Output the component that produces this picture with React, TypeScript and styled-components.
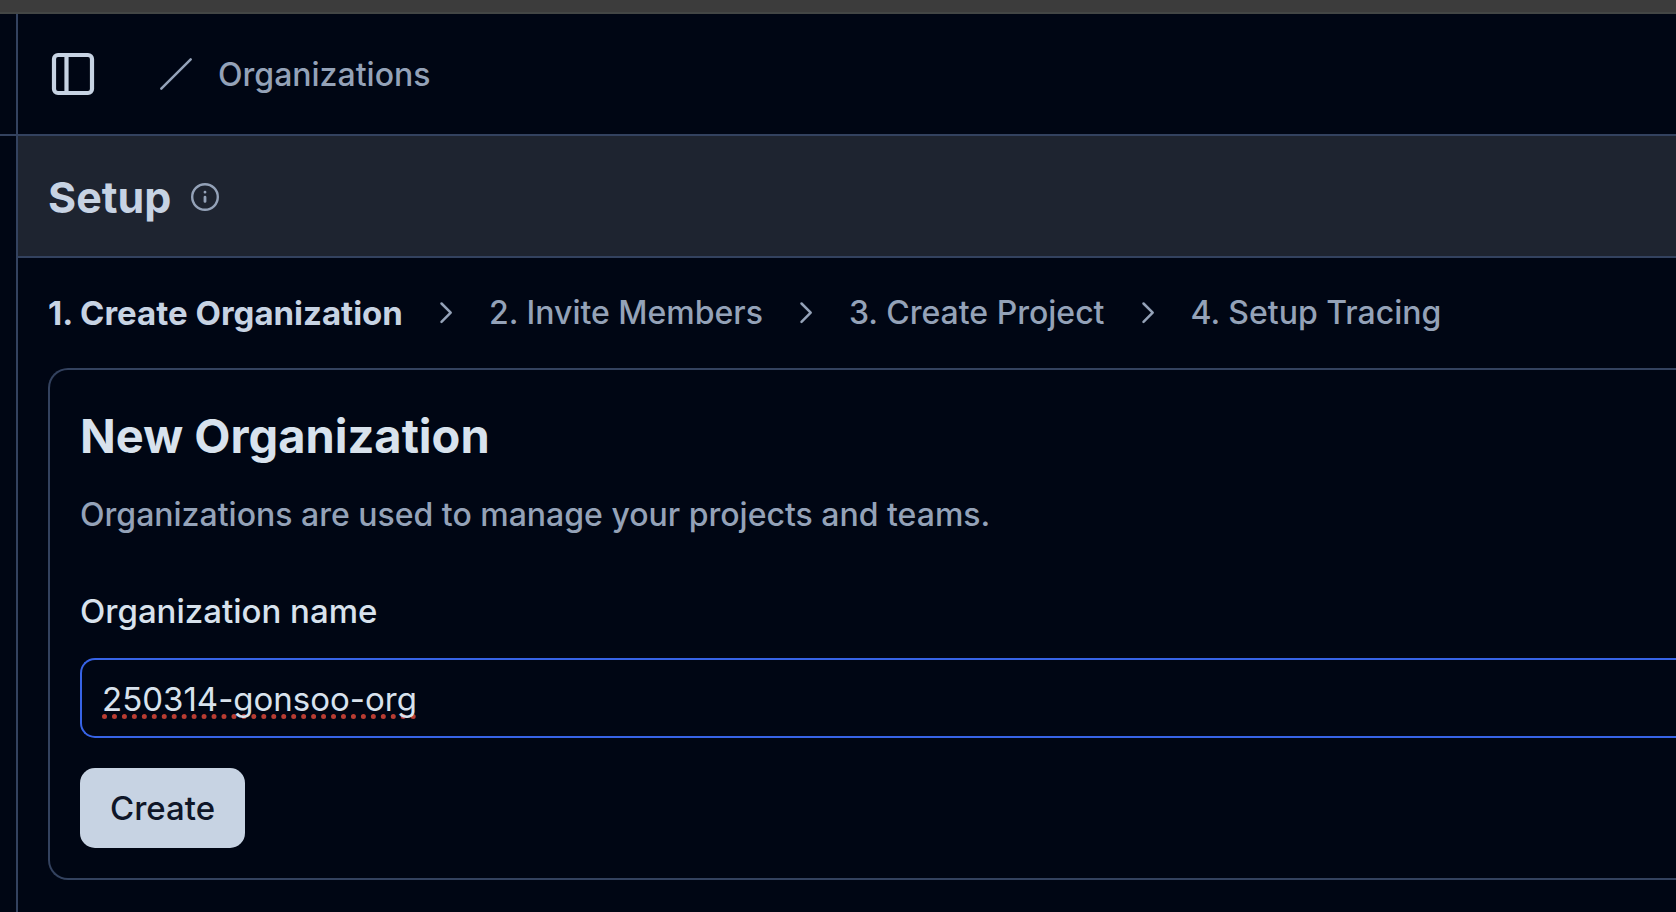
import React from "react";
import styled, { createGlobalStyle } from "styled-components";

const color = {
  page: "#000614",
  line: "#33425f",
  band: "#1e2430",
  bright: "#d8e2ed",
  primary: "#c7d3e3",
  muted: "#94a2b8",
  focus: "#3763e6",
};

const GlobalStyle = createGlobalStyle`
  *, *::before, *::after { box-sizing: border-box; }
  html, body, #root { min-height: 100%; }
  body {
    margin: 0;
    background: ${color.page};
    color: ${color.bright};
    font-family: Inter, "Liberation Sans", sans-serif;
    font-size: 32px;
    font-weight: 450;
    line-height: 48px;
    overflow-x: hidden;
  }
  h1, h2, p, ol { margin: 0; padding: 0; }
`;

const Shell = styled.div`
  min-height: 100vh;
  display: flex;
  flex-direction: column;
`;

const WindowEdge = styled.div`
  height: 14px;
  background: #3c3c3c;
  border-bottom: 2px solid #434645;
`;

const Columns = styled.div`
  flex: 1;
  display: flex;
`;

const Sidebar = styled.aside`
  width: 18px;
  flex: none;
  border-right: 2px solid ${color.line};
`;

const SidebarHeader = styled.div`
  height: 122px;
  border-bottom: 2px solid ${color.line};
`;

const Main = styled.main`
  flex: 1;
  min-width: 0;
`;

const TopBar = styled.header`
  height: 122px;
  display: flex;
  align-items: center;
  padding: 0 30px;
  border-bottom: 2px solid ${color.line};
`;

const IconButton = styled.button`
  display: flex;
  padding: 0;
  border: 0;
  background: none;
  color: ${color.primary};
`;

const Breadcrumb = styled.nav`
  display: flex;
  align-items: center;
  gap: 24px;
  margin-left: 60px;
  color: ${color.muted};
`;

const CrumbLink = styled.a`
  padding-top: 2px;
  color: inherit;
  text-decoration: none;
`;

const TitleBar = styled.div`
  height: 122px;
  display: flex;
  align-items: center;
  gap: 19px;
  padding: 2px 30px 0;
  background: ${color.band};
  border-bottom: 2px solid ${color.line};
  color: ${color.muted};
`;

const PageTitle = styled.h1`
  color: ${color.primary};
  font-size: 43px;
  font-weight: 700;
`;

const Content = styled.div`
  padding: 31px 0 30px 30px;
`;

const Steps = styled.ol`
  display: flex;
  align-items: center;
  gap: 31px;
  list-style: none;
  white-space: nowrap;
  color: ${color.muted};
`;

const Step = styled.li<{ $active?: boolean }>`
  color: ${(p) => (p.$active ? color.primary : "inherit")};
  font-size: ${(p) => (p.$active ? "33px" : "32px")};
  font-weight: ${(p) => (p.$active ? 700 : "inherit")};
`;

const Separator = styled.li`
  display: flex;
`;

const Card = styled.section`
  margin-top: 31px;
  padding: 30px 0 30px 30px;
  border: 2px solid ${color.line};
  border-right: 0;
  border-radius: 20px 0 0 20px;
`;

const CardTitle = styled.h2`
  padding: 12px 0;
  font-size: 47px;
  font-weight: 700;
`;

const Description = styled.p`
  margin-top: 19px;
  color: ${color.muted};
`;

const Form = styled.form`
  display: flex;
  flex-direction: column;
  align-items: flex-start;
  margin-top: 48px;
  font-size: 33px;
`;

const Label = styled.label`
  font-weight: 500;
`;

const TextInput = styled.input`
  width: 100%;
  height: 80px;
  margin: 23px 0 30px;
  padding: 2px 20px 0;
  border: 2px solid ${color.focus};
  border-right: 0;
  border-radius: 15px 0 0 15px;
  outline: 0;
  background: transparent;
  color: ${color.bright};
  font: inherit;
  font-weight: 400;
  text-decoration: underline dotted #b83c32 5px;
  text-decoration-skip-ink: none;
  text-underline-offset: 3px;
`;

const SubmitButton = styled.button`
  height: 80px;
  padding: 0 30px;
  border: 0;
  border-radius: 15px;
  background: ${color.primary};
  color: #0f1628;
  font: inherit;
  font-weight: 500;
`;

const Icon = styled.svg`
  flex: none;
  fill: none;
  stroke: currentColor;
  stroke-linecap: round;
  stroke-linejoin: round;
`;

const PanelIcon = () => (
  <Icon width="50" height="50" viewBox="0 0 50 50" strokeWidth="4.200">
    <rect x="6" y="6" width="38" height="38" rx="4" />
    <path d="M18.500 6v38" />
  </Icon>
);

const SlashIcon = () => (
  <Icon width="36" height="36" viewBox="0 0 36 36" strokeWidth="2.500">
    <path d="M32.700 3.300 3.300 32.700" />
  </Icon>
);

const InfoIcon = () => (
  <Icon width="30" height="30" viewBox="0 0 30 30" strokeWidth="2.400">
    <circle cx="15" cy="15" r="12.800" />
    <path strokeWidth="2.800" d="M15 15.200v4.200M15 10.200h.01" />
  </Icon>
);

const ChevronIcon = () => (
  <Icon width="24" height="24" viewBox="0 0 24 24" strokeWidth="2.500">
    <path d="m7.500 2.500 9.200 9.200-9.200 9.200" />
  </Icon>
);

const steps = [
  "1. Create Organization",
  "2. Invite Members",
  "3. Create Project",
  "4. Setup Tracing",
];

export default function App() {
  return (
    <Shell>
      <GlobalStyle />
      <WindowEdge />
      <Columns>
        <Sidebar>
          <SidebarHeader />
        </Sidebar>
        <Main>
          <TopBar>
            <IconButton type="button" aria-label="Toggle sidebar">
              <PanelIcon />
            </IconButton>
            <Breadcrumb aria-label="Breadcrumb">
              <SlashIcon />
              <CrumbLink href="#organizations">Organizations</CrumbLink>
            </Breadcrumb>
          </TopBar>
          <TitleBar>
            <PageTitle>Setup</PageTitle>
            <InfoIcon />
          </TitleBar>
          <Content>
            <Steps>
              {steps.map((step, i) => (
                <React.Fragment key={step}>
                  {i > 0 && (
                    <Separator aria-hidden="true">
                      <ChevronIcon />
                    </Separator>
                  )}
                  <Step $active={i === 0}>{step}</Step>
                </React.Fragment>
              ))}
            </Steps>
            <Card>
              <CardTitle>New Organization</CardTitle>
              <Description>
                Organizations are used to manage your projects and teams.
              </Description>
              <Form onSubmit={(e) => e.preventDefault()}>
                <Label htmlFor="org-name">Organization name</Label>
                <TextInput
                  id="org-name"
                  type="text"
                  defaultValue="250314-gonsoo-org"
                />
                <SubmitButton type="submit">Create</SubmitButton>
              </Form>
            </Card>
          </Content>
        </Main>
      </Columns>
    </Shell>
  );
}
